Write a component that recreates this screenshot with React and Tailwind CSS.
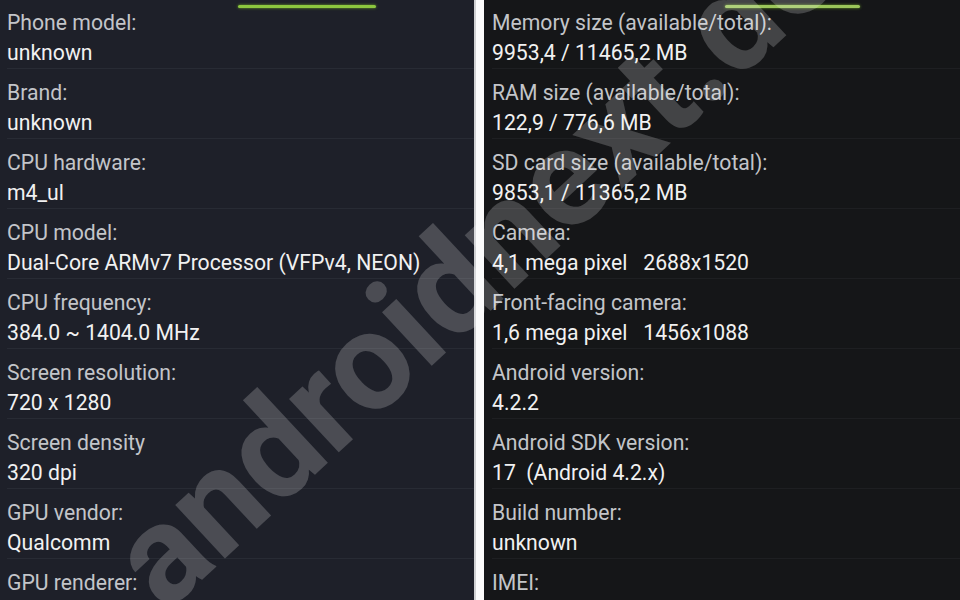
import React from "react";

const left = [
  ["Phone model:", "unknown"],
  ["Brand:", "unknown"],
  ["CPU hardware:", "m4_ul"],
  ["CPU model:", "Dual-Core ARMv7 Processor (VFPv4, NEON)"],
  ["CPU frequency:", "384.0 ~ 1404.0 MHz"],
  ["Screen resolution:", "720 x 1280"],
  ["Screen density", "320 dpi"],
  ["GPU vendor:", "Qualcomm"],
  ["GPU renderer:", ""],
];

const right = [
  ["Memory size (available/total):", "9953,4 / 11465,2 MB"],
  ["RAM size (available/total):", "122,9 / 776,6 MB"],
  ["SD card size (available/total):", "9853,1 / 11365,2 MB"],
  ["Camera:", "4,1 mega pixel   2688x1520"],
  ["Front-facing camera:", "1,6 mega pixel   1456x1088"],
  ["Android version:", "4.2.2"],
  ["Android SDK version:", "17  (Android 4.2.x)"],
  ["Build number:", "unknown"],
  ["IMEI:", ""],
];

function Row({ label, value, line }) {
  return (
    <div className="flex flex-col">
      <div className="h-[30px] leading-[30px] text-[#c3c5c9] whitespace-pre">{label}</div>
      <div className="h-[30px] leading-[30px] text-[#f1f1f1] whitespace-pre">{value}</div>
      <div className={`h-px ${line}`} />
      <div className="h-[9px]" />
    </div>
  );
}

export default function App() {
  return (
    <div
      className="relative w-[960px] h-[600px] overflow-hidden flex text-[21.2px]"
      style={{ fontFamily: "Roboto, 'Noto Sans', sans-serif" }}
    >
      <div className="w-[474px] h-full bg-[#1e2029] flex flex-col">
        <div className="h-[13px] flex">
          <div className="ml-[238px] mt-[5px] w-[138px] h-[3px] bg-[#8cc63f] rounded-full shadow-[0_0_3px_#6fa32a]" />
        </div>
        <div className="pl-[7px] flex flex-col">
          {left.map(([l, v]) => (
            <Row key={l} label={l} value={v} line="bg-[#282b34]" />
          ))}
        </div>
      </div>
      <div className="w-[2px] h-full bg-[#cfd0d2]" />
      <div className="w-[8px] h-full bg-[#fbfbfb]" />
      <div className="flex-1 h-full bg-[#151618] flex flex-col">
        <div className="h-[18px] flex">
          <div className="ml-[241px] mt-[5px] w-[135px] h-[3px] bg-[#9bc55a] rounded-full shadow-[0_0_3px_#6fa32a]" />
        </div>
        <div className="pl-[8px] flex flex-col">
          {right.map(([l, v]) => (
            <Row key={l} label={l} value={v} line="bg-[#1e1f22]" />
          ))}
        </div>
      </div>
      <div
        className="absolute left-[474px] top-[262px] -translate-x-1/2 -translate-y-1/2 -rotate-[43deg] whitespace-nowrap font-bold text-[138px] leading-none text-white/20 pointer-events-none"
        style={{ fontFamily: "Roboto, sans-serif" }}
      >
        androidnext.de
      </div>
    </div>
  );
}
